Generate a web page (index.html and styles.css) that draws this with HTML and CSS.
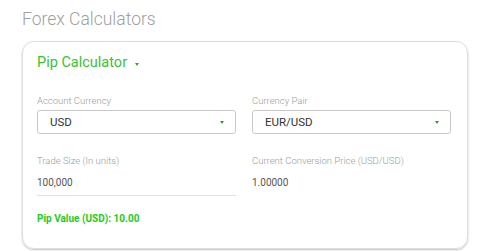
FILE: index.html
```html
<!DOCTYPE html>
<html lang="en">
<head>
<meta charset="utf-8">
<title>Forex Calculators</title>
<link rel="stylesheet" href="styles.css">
</head>
<body>
<h1 class="page-title">Forex Calculators</h1>
<section class="card">
  <h2 class="card-title">Pip Calculator <span class="title-caret"></span></h2>
  <div class="form-grid">
    <div class="field">
      <div class="field-label">Account Currency</div>
      <div class="select">
        <span class="select-value">USD</span>
        <span class="select-caret"></span>
      </div>
    </div>
    <div class="field">
      <div class="field-label">Currency Pair</div>
      <div class="select">
        <span class="select-value">EUR/USD</span>
        <span class="select-caret"></span>
      </div>
    </div>
    <div class="field">
      <div class="field-label">Trade Size (In units)</div>
      <div class="input-line">100,000</div>
    </div>
    <div class="field">
      <div class="field-label">Current Conversion Price (USD/USD)</div>
      <div class="plain-value">1.00000</div>
    </div>
  </div>
  <div class="result">Pip Value (USD): 10.00</div>
</section>
</body>
</html>
```
FILE: styles.css
```css
* { box-sizing: border-box; }
html, body { margin: 0; padding: 0; background: #fff; }
body {
  font-family: Roboto, "Noto Sans", sans-serif;
  width: 481px;
  height: 251px;
  overflow: hidden;
}
.page-title {
  margin: 0;
  padding: 8px 0 0 22px;
  height: 41px;
  font-size: 17.5px;
  line-height: 22px;
  font-weight: 300;
  color: #a0a0a0;
}
.card {
  margin-left: 22px;
  width: 446px;
  height: 208px;
  border: 1px solid #dedede;
  border-radius: 12px;
  box-shadow: 0 1px 2px rgba(0,0,0,0.25);
  padding: 11px 16px 0 14px;
}
.card-title {
  margin: 0;
  font-size: 14.5px;
  line-height: 20px;
  font-weight: 400;
  color: #38c238;
  display: flex;
  align-items: center;
}
.title-caret {
  display: inline-block;
  margin-left: 8px;
  margin-top: 3px;
  border-left: 2.5px solid transparent;
  border-right: 2.5px solid transparent;
  border-top: 3px solid #34a534;
}
.form-grid {
  margin-top: 22px;
  display: grid;
  grid-template-columns: 199px 199px;
  column-gap: 16px;
  row-gap: 21px;
}
.field-label {
  font-size: 9.5px;
  line-height: 12px;
  font-weight: 300;
  color: #9a9a9a;
  margin-bottom: 3px;
}
.select {
  height: 24px;
  border: 1px solid #c8c8c8;
  border-radius: 3px;
  display: flex;
  align-items: center;
  justify-content: space-between;
  padding: 0 11px 0 12px;
}
.select-value {
  font-size: 11.5px;
  color: #333;
}
.select-caret {
  border-left: 2.5px solid transparent;
  border-right: 2.5px solid transparent;
  border-top: 3px solid #2f9e2f;
}
.input-line {
  font-size: 10px;
  color: #555;
  height: 26px;
  padding-top: 7px;
  border-bottom: 1px solid #e0e0e0;
}
.plain-value {
  font-size: 10px;
  color: #555;
  padding-top: 7px;
}
.result {
  margin-top: 17px;
  font-size: 10px;
  font-weight: 700;
  color: #22cc22;
}
```
